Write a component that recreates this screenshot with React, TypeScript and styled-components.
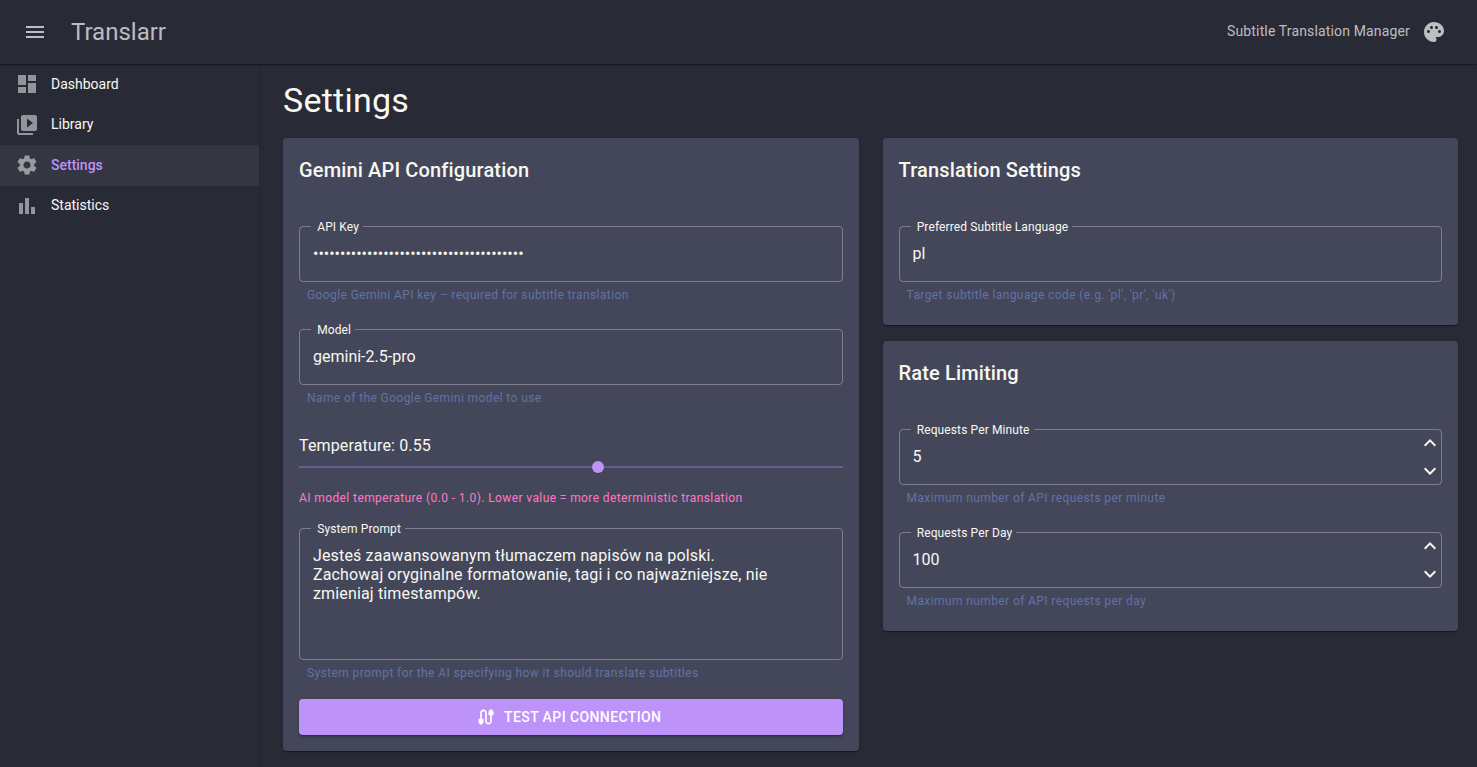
import React from "react";
import styled, { createGlobalStyle, css } from "styled-components";
import {
  MdBarChart,
  MdCable,
  MdDashboard,
  MdKeyboardArrowDown,
  MdKeyboardArrowUp,
  MdMenu,
  MdPalette,
  MdSettings,
  MdVideoLibrary,
} from "react-icons/md";

const color = {
  background: "#282a36",
  surface: "#44475a",
  text: "#f8f8f2",
  primary: "#bd93f9",
  secondary: "#ff79c6",
  muted: "#6272a4",
  appbarText: "rgba(255, 255, 255, 0.7)",
  drawerIcon: "rgba(255, 255, 255, 0.5)",
  outline: "rgba(255, 255, 255, 0.3)",
};

const elevation1 =
  "0 2px 1px -1px rgba(0,0,0,.2), 0 1px 1px 0 rgba(0,0,0,.14), 0 1px 3px 0 rgba(0,0,0,.12)";
const elevation2 =
  "0 3px 1px -2px rgba(0,0,0,.2), 0 2px 2px 0 rgba(0,0,0,.14), 0 1px 5px 0 rgba(0,0,0,.12)";

const GlobalStyle = createGlobalStyle`
  *, *::before, *::after { box-sizing: border-box; }
  body {
    margin: 0;
    background: ${color.background};
    color: ${color.text};
    font-family: Roboto, "Liberation Sans", sans-serif;
    font-size: 14px;
    overflow: hidden;
  }
`;

const Page = styled.div`
  display: flex;
  flex-direction: column;
  height: 100vh;
`;

const AppBar = styled.header`
  display: flex;
  align-items: center;
  flex: none;
  height: 64px;
  padding: 0 31px 0 23px;
  background: ${color.background};
  color: ${color.appbarText};
  box-shadow: ${elevation1};
  z-index: 2;
`;

const BarIcon = styled.span`
  display: flex;
  font-size: 24px;
`;

const Brand = styled.div`
  margin-left: 24px;
  font-size: 24px;
  line-height: 32px;
`;

const Tagline = styled.div`
  margin: 0 12px 2px auto;
  font-size: 14px;
  line-height: 20px;
  letter-spacing: 0.01071em;
`;

const Body = styled.div`
  display: flex;
  flex: 1;
  min-height: 0;
`;

const Drawer = styled.nav`
  flex: none;
  width: 259px;
  background: ${color.background};
  box-shadow: ${elevation1};
`;

const NavItem = styled.a<{ $active?: boolean }>`
  display: flex;
  align-items: center;
  gap: 12px;
  height: 40.5px;
  padding: 0 15px 0.3px;
  font-size: 14px;
  line-height: 24.5px;
  ${(p) =>
    p.$active &&
    css`
      background: rgba(255, 255, 255, 0.06);
      color: ${color.primary};
      font-weight: 500;
    `}

  svg {
    font-size: 24px;
    color: ${color.drawerIcon};
  }
`;

const Main = styled.main`
  flex: 1;
  padding: 15px 19px 0 24px;
`;

const PageTitle = styled.h1`
  margin: 0 0 17px;
  font-size: 34px;
  font-weight: 400;
  line-height: 42px;
  letter-spacing: 0.00735em;
`;

const Columns = styled.div`
  display: grid;
  grid-template-columns: 1fr 1fr;
  gap: 24px;
  align-items: start;
`;

const Column = styled.div`
  display: flex;
  flex-direction: column;
  gap: 16px;
`;

const Card = styled.section<{ $bottom?: number }>`
  padding: 16px 16px ${(p) => p.$bottom ?? 20}px;
  border-radius: 4px;
  background: ${color.surface};
  box-shadow: ${elevation1};
`;

const CardTitle = styled.h2`
  margin: 0 0 40px;
  font-size: 20px;
  font-weight: 500;
  line-height: 32px;
  letter-spacing: 0.0075em;
`;

const Fields = styled.div`
  display: flex;
  flex-direction: column;
  gap: 24px;
`;

const Outline = styled.div<{ $height?: number }>`
  position: relative;
  display: flex;
  height: ${(p) => p.$height ?? 56}px;
  border: 1px solid ${color.outline};
  border-radius: 4px;
`;

const FieldLabel = styled.label`
  position: absolute;
  top: -9px;
  left: 11px;
  padding: 0 4.2px 0 6.2px;
  background: ${color.surface};
  font-size: 12px;
  line-height: 18px;
  letter-spacing: 0.00938em;
`;

const controlText = css`
  flex: 1;
  min-width: 0;
  border: 0;
  outline: 0;
  margin: 0;
  background: transparent;
  color: ${color.text};
  font-family: inherit;
  font-size: 16px;
`;

const Input = styled.input`
  ${controlText}
  padding: 0 13px 2px;
`;

const TextArea = styled.textarea`
  ${controlText}
  padding: 17px 13px;
  resize: none;
  line-height: 19px;
  letter-spacing: 0.00938em;
  overflow: hidden;
`;

const Spinner = styled.div`
  display: flex;
  flex-direction: column;
  margin: -1px -1px -1px 0;

  svg {
    width: 24px;
    height: 28px;
  }
`;

const Helper = styled.p`
  margin: 0;
  padding: 3px 8px 0;
  color: ${color.muted};
  font-size: 12px;
  line-height: 20px;
  letter-spacing: 0.03333em;
`;

const SliderGroup = styled.div`
  display: flex;
  flex-direction: column;
  height: 72px;
  margin: 2px 0 -2px;
`;

const SliderLabel = styled.div`
  font-size: 16px;
  line-height: 24px;
  letter-spacing: 0.00938em;
`;

const Track = styled.div`
  display: flex;
  align-items: center;
  height: 2px;
  margin: 8px 0 20px;
  background: rgba(189, 147, 249, 0.3);
`;

const Thumb = styled.span`
  flex: none;
  width: 12px;
  height: 12px;
  border-radius: 50%;
  background: ${color.primary};
`;

const SliderHint = styled.div`
  color: ${color.secondary};
  font-size: 12px;
  line-height: 20px;
  letter-spacing: 0.03333em;
`;

const TestButton = styled.button`
  display: flex;
  align-items: center;
  justify-content: center;
  width: 100%;
  height: 36px;
  margin-top: 16px;
  padding: 0;
  border: 0;
  border-radius: 4px;
  background: ${color.primary};
  color: #fff;
  font-family: inherit;
  font-size: 14px;
  font-weight: 500;
  letter-spacing: 0.02857em;
  text-transform: uppercase;
  box-shadow: ${elevation2};

  svg {
    margin: 0 8px 0 -4px;
    font-size: 20px;
  }
`;

type FieldProps = {
  label: string;
  value: string;
  helper: string;
  kind?: "text" | "password" | "number" | "multiline";
};

function Field({ label, value, helper, kind = "text" }: FieldProps) {
  return (
    <div>
      <Outline $height={kind === "multiline" ? 132 : 56}>
        <FieldLabel>{label}</FieldLabel>
        {kind === "multiline" ? (
          <TextArea defaultValue={value} spellCheck={false} />
        ) : (
          <Input
            type={kind === "password" ? "password" : "text"}
            defaultValue={value}
            spellCheck={false}
          />
        )}
        {kind === "number" && (
          <Spinner>
            <MdKeyboardArrowUp />
            <MdKeyboardArrowDown />
          </Spinner>
        )}
      </Outline>
      <Helper>{helper}</Helper>
    </div>
  );
}

const navItems = [
  { label: "Dashboard", icon: <MdDashboard /> },
  { label: "Library", icon: <MdVideoLibrary /> },
  { label: "Settings", icon: <MdSettings />, active: true },
  { label: "Statistics", icon: <MdBarChart /> },
];

const systemPrompt =
  "Jesteś zaawansowanym tłumaczem napisów na polski.\nZachowaj oryginalne formatowanie, tagi i co najważniejsze, nie zmieniaj timestampów.";

export default function App() {
  const temperature = 0.55;
  return (
    <Page>
      <GlobalStyle />
      <AppBar>
        <BarIcon>
          <MdMenu />
        </BarIcon>
        <Brand>Translarr</Brand>
        <Tagline>Subtitle Translation Manager</Tagline>
        <BarIcon>
          <MdPalette />
        </BarIcon>
      </AppBar>
      <Body>
        <Drawer>
          {navItems.map((item) => (
            <NavItem key={item.label} $active={item.active}>
              {item.icon}
              {item.label}
            </NavItem>
          ))}
        </Drawer>
        <Main>
          <PageTitle>Settings</PageTitle>
          <Columns>
            <Card $bottom={16}>
              <CardTitle>Gemini API Configuration</CardTitle>
              <Fields>
                <Field
                  label="API Key"
                  kind="password"
                  value={"x".repeat(39)}
                  helper="Google Gemini API key – required for subtitle translation"
                />
                <Field
                  label="Model"
                  value="gemini-2.5-pro"
                  helper="Name of the Google Gemini model to use"
                />
                <SliderGroup>
                  <SliderLabel>Temperature: {temperature}</SliderLabel>
                  <Track>
                    <Thumb
                      style={{
                        marginLeft: `calc(${temperature * 100}% - 6px)`,
                      }}
                    />
                  </Track>
                  <SliderHint>
                    AI model temperature (0.0 - 1.0). Lower value = more
                    deterministic translation
                  </SliderHint>
                </SliderGroup>
                <Field
                  label="System Prompt"
                  kind="multiline"
                  value={systemPrompt}
                  helper="System prompt for the AI specifying how it should translate subtitles"
                />
              </Fields>
              <TestButton>
                <MdCable />
                Test API Connection
              </TestButton>
            </Card>
            <Column>
              <Card>
                <CardTitle>Translation Settings</CardTitle>
                <Field
                  label="Preferred Subtitle Language"
                  value="pl"
                  helper="Target subtitle language code (e.g. 'pl', 'pr', 'uk')"
                />
              </Card>
              <Card>
                <CardTitle>Rate Limiting</CardTitle>
                <Fields>
                  <Field
                    label="Requests Per Minute"
                    kind="number"
                    value="5"
                    helper="Maximum number of API requests per minute"
                  />
                  <Field
                    label="Requests Per Day"
                    kind="number"
                    value="100"
                    helper="Maximum number of API requests per day"
                  />
                </Fields>
              </Card>
            </Column>
          </Columns>
        </Main>
      </Body>
    </Page>
  );
}
